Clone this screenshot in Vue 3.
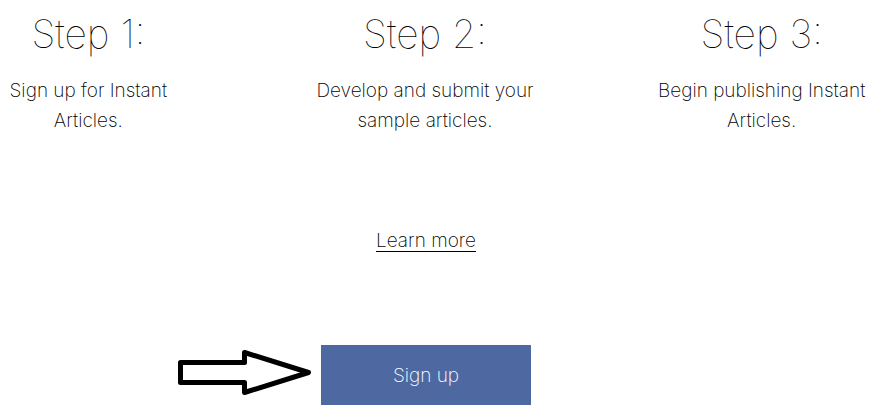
<template>
  <main class="page">
    <section class="steps">
      <article v-for="step in steps" :key="step.title" class="step">
        <h2 class="title">{{ step.title }}</h2>
        <p class="text">{{ step.lines[0] }}<br />{{ step.lines[1] }}</p>
      </article>
    </section>
    <a class="more" href="#more">Learn more</a>
    <div class="action">
      <svg class="arrow" viewBox="0 0 136 48" aria-hidden="true">
        <path d="M3.5 13.5H67.5V3.5L131.5 23.5L67.5 43.5V33.5H3.5Z" />
      </svg>
      <button class="signup" type="button">Sign up</button>
    </div>
  </main>
</template>

<script setup>
const steps = [
  { title: 'Step 1:', lines: ['Sign up for Instant', 'Articles.'] },
  { title: 'Step 2:', lines: ['Develop and submit your', 'sample articles.'] },
  { title: 'Step 3:', lines: ['Begin publishing Instant', 'Articles.'] },
]
</script>

<style>
body {
  margin: 0;
  background: #fff;
}
</style>

<style scoped>
.page {
  display: flex;
  flex-direction: column;
  align-items: center;
  padding-right: 24px;
  overflow-x: clip;
  font-family: Inter, "Liberation Sans", sans-serif;
  font-size: 19px;
  font-weight: 200;
  color: #000;
}
.steps {
  align-self: stretch;
  display: grid;
  grid-template-columns: repeat(3, 1fr);
  margin: 0 -78px 0 -80px;
  padding-top: 8px;
}
.step {
  text-align: center;
}
.title {
  margin: 0;
  font-size: 39px;
  line-height: 52px;
  font-weight: 100;
}
.text {
  margin: 16px 0 0;
  line-height: 30px;
  white-space: nowrap;
}
.more {
  margin-top: 95px;
  line-height: 20px;
  color: inherit;
  text-decoration: none;
  border-bottom: 1px solid #000;
}
.action {
  position: relative;
  margin-top: 93px;
}
.arrow {
  position: absolute;
  right: 100%;
  top: 4px;
  width: 136px;
  height: 48px;
  margin-right: 8px;
  fill: #fff;
  stroke: #000;
  stroke-width: 5;
  stroke-linejoin: round;
}
.signup {
  display: block;
  width: 210px;
  height: 60px;
  border: 0;
  padding: 0;
  background: #4e69a2;
  color: #fff;
  font: inherit;
}
</style>
